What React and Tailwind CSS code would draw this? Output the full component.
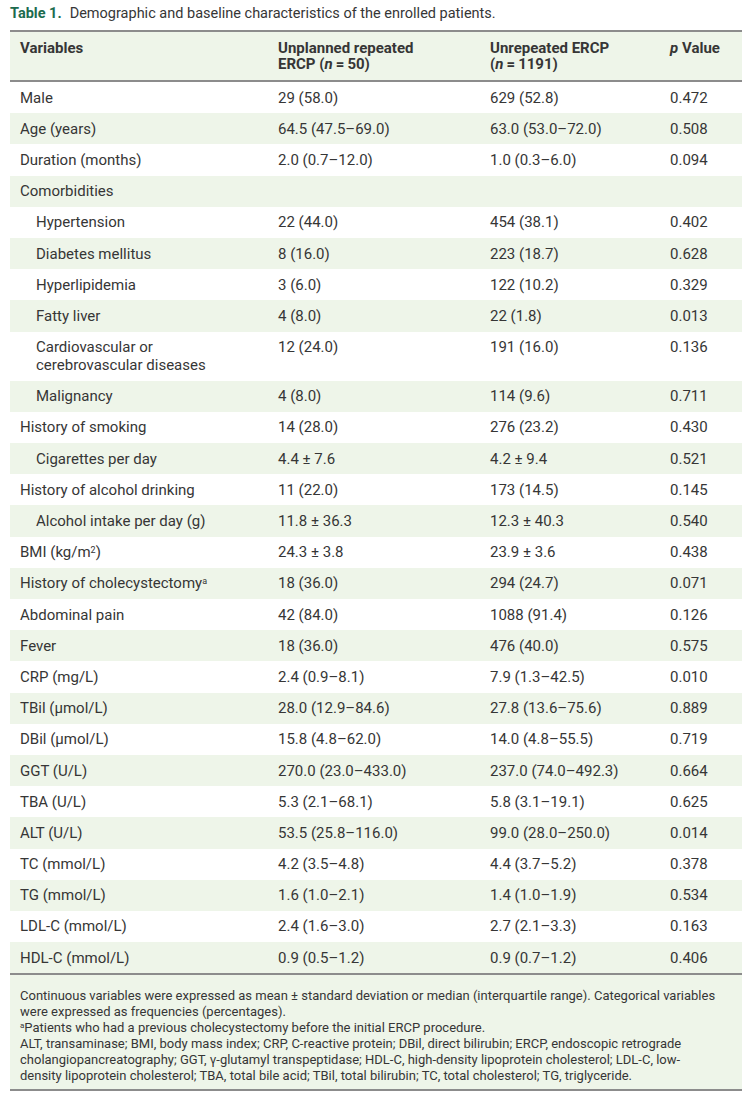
import React from "react";

const rows = [
  { v: "Male", a: "29 (58.0)", b: "629 (52.8)", p: "0.472" },
  { v: "Age (years)", a: "64.5 (47.5–69.0)", b: "63.0 (53.0–72.0)", p: "0.508" },
  { v: "Duration (months)", a: "2.0 (0.7–12.0)", b: "1.0 (0.3–6.0)", p: "0.094" },
  { v: "Comorbidities", a: "", b: "", p: "" },
  { v: "Hypertension", a: "22 (44.0)", b: "454 (38.1)", p: "0.402", sub: true },
  { v: "Diabetes mellitus", a: "8 (16.0)", b: "223 (18.7)", p: "0.628", sub: true },
  { v: "Hyperlipidemia", a: "3 (6.0)", b: "122 (10.2)", p: "0.329", sub: true },
  { v: "Fatty liver", a: "4 (8.0)", b: "22 (1.8)", p: "0.013", sub: true },
  { v: "Cardiovascular or cerebrovascular diseases", a: "12 (24.0)", b: "191 (16.0)", p: "0.136", sub: true, two: true },
  { v: "Malignancy", a: "4 (8.0)", b: "114 (9.6)", p: "0.711", sub: true },
  { v: "History of smoking", a: "14 (28.0)", b: "276 (23.2)", p: "0.430" },
  { v: "Cigarettes per day", a: "4.4 ± 7.6", b: "4.2 ± 9.4", p: "0.521", sub: true },
  { v: "History of alcohol drinking", a: "11 (22.0)", b: "173 (14.5)", p: "0.145" },
  { v: "Alcohol intake per day (g)", a: "11.8 ± 36.3", b: "12.3 ± 40.3", p: "0.540", sub: true },
  { v: "BMI", a: "24.3 ± 3.8", b: "23.9 ± 3.6", p: "0.438", bmi: true },
  { v: "History of cholecystectomy", a: "18 (36.0)", b: "294 (24.7)", p: "0.071", sup: true },
  { v: "Abdominal pain", a: "42 (84.0)", b: "1088 (91.4)", p: "0.126" },
  { v: "Fever", a: "18 (36.0)", b: "476 (40.0)", p: "0.575" },
  { v: "CRP (mg/L)", a: "2.4 (0.9–8.1)", b: "7.9 (1.3–42.5)", p: "0.010" },
  { v: "TBil (μmol/L)", a: "28.0 (12.9–84.6)", b: "27.8 (13.6–75.6)", p: "0.889" },
  { v: "DBil (μmol/L)", a: "15.8 (4.8–62.0)", b: "14.0 (4.8–55.5)", p: "0.719" },
  { v: "GGT (U/L)", a: "270.0 (23.0–433.0)", b: "237.0 (74.0–492.3)", p: "0.664" },
  { v: "TBA (U/L)", a: "5.3 (2.1–68.1)", b: "5.8 (3.1–19.1)", p: "0.625" },
  { v: "ALT (U/L)", a: "53.5 (25.8–116.0)", b: "99.0 (28.0–250.0)", p: "0.014" },
  { v: "TC (mmol/L)", a: "4.2 (3.5–4.8)", b: "4.4 (3.7–5.2)", p: "0.378" },
  { v: "TG (mmol/L)", a: "1.6 (1.0–2.1)", b: "1.4 (1.0–1.9)", p: "0.534" },
  { v: "LDL-C (mmol/L)", a: "2.4 (1.6–3.0)", b: "2.7 (2.1–3.3)", p: "0.163" },
  { v: "HDL-C (mmol/L)", a: "0.9 (0.5–1.2)", b: "0.9 (0.7–1.2)", p: "0.406" },
];

const grid = "grid grid-cols-[268px_212px_180px_1fr]";

function Label({ r }) {
  if (r.bmi)
    return (
      <>
        BMI (kg/m<sup className="text-[9px] leading-none">2</sup>)
      </>
    );
  if (r.sup)
    return (
      <>
        {r.v}
        <sup className="text-[9px] leading-none">a</sup>
      </>
    );
  if (r.two)
    return (
      <>
        Cardiovascular or
        <br />
        cerebrovascular diseases
      </>
    );
  return r.v;
}

export default function App() {
  return (
    <div
      className="w-[754px] h-[1104px] bg-white text-[#363636] px-[10px] pt-[5px]"
      style={{ fontFamily: "Roboto, 'Liberation Sans', sans-serif" }}
    >
      <div className="text-[14.5px] leading-[18px] h-[25px]">
        <span className="font-bold text-[#1c6b4e]">Table 1.</span>
        <span className="ml-[8px]">Demographic and baseline characteristics of the enrolled patients.</span>
      </div>
      <div className="w-[732px] border-t-2 border-[#8c8c8c]">
        <div className={`${grid} bg-[#eef5e9] font-bold text-[15px] leading-[16px] py-[8px] border-b-2 border-[#8c8c8c]`}>
          <div className="pl-[10px]">Variables</div>
          <div>
            Unplanned repeated
            <br />
            ERCP (<i>n</i>{"\u2009=\u2009"}50)
          </div>
          <div>
            Unrepeated ERCP
            <br />
            (<i>n</i>{"\u2009=\u2009"}1191)
          </div>
          <div>
            <i>p</i> Value
          </div>
        </div>
        {rows.map((r, i) => (
          <div
            key={i}
            className={`${grid} text-[15px] leading-[18px] py-[6.6px] ${i % 2 === 1 ? "bg-[#eef5e9]" : "bg-white"}`}
          >
            <div className={r.sub ? "pl-[26px]" : "pl-[10px]"}>
              <Label r={r} />
            </div>
            <div>{r.a}</div>
            <div>{r.b}</div>
            <div>{r.p}</div>
          </div>
        ))}
        <div className="bg-[#eef5e9] border-t-2 border-b-2 border-[#8c8c8c] px-[10px] pt-[13px] pb-[5px] text-[13px] leading-[16px]">
          <div>
            Continuous variables were expressed as mean ± standard deviation or median (interquartile range). Categorical variables
            <br />
            were expressed as frequencies (percentages).
          </div>
          <div>
            <sup className="text-[8px] leading-none">a</sup>Patients who had a previous cholecystectomy before the initial ERCP procedure.
          </div>
          <div>
            ALT, transaminase; BMI, body mass index; CRP, C-reactive protein; DBil, direct bilirubin; ERCP, endoscopic retrograde
            <br />
            cholangiopancreatography; GGT, γ-glutamyl transpeptidase; HDL-C, high-density lipoprotein cholesterol; LDL-C, low-
            <br />
            density lipoprotein cholesterol; TBA, total bile acid; TBil, total bilirubin; TC, total cholesterol; TG, triglyceride.
          </div>
        </div>
      </div>
    </div>
  );
}
